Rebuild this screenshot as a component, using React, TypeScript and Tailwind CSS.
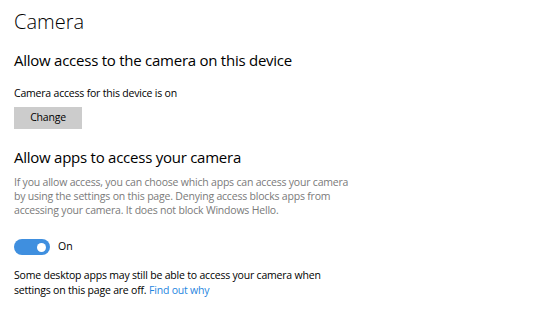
export default function App() {
  return (
    <div
      className="min-h-[336px] w-[560px] bg-white pl-[14px] text-[#000000]"
      style={{ fontFamily: '"Open Sans", "Noto Sans", sans-serif' }}
    >
      <h1 className="pt-[8px] text-[20px] font-light leading-[28px]">Camera</h1>

      <h2 className="mt-[13px] text-[15px] leading-[22px] tracking-[-0.25px]">
        Allow access to the camera on this device
      </h2>

      <p className="mt-[14px] text-[10.5px] leading-[16px] tracking-[-0.2px]">
        Camera access for this device is on
      </p>

      <button className="mt-[6px] flex h-[22px] w-[68px] items-center justify-center bg-[#cccccc] text-[10.5px] tracking-[-0.2px]">
        Change
      </button>

      <h2 className="mt-[17px] text-[15px] leading-[22px] tracking-[-0.25px]">
        Allow apps to access your camera
      </h2>

      <p className="mt-[7px] w-[345px] text-[10.5px] leading-[14px] tracking-[-0.2px] text-[#7a7a7a]">
        If you allow access, you can choose which apps can access your camera by using the
        settings on this page. Denying access blocks apps from accessing your camera. It does
        not block Windows Hello.
      </p>

      <div className="mt-[22px] flex items-center gap-[8px]">
        <div className="flex h-[16px] w-[36px] items-center justify-end rounded-full bg-[#3f8fdf] pr-[4px]">
          <div className="h-[9px] w-[9px] rounded-full bg-white" />
        </div>
        <span className="text-[10.5px]">On</span>
      </div>

      <p className="mt-[13px] w-[320px] text-[10.5px] leading-[15px] tracking-[-0.2px]">
        Some desktop apps may still be able to access your camera when settings on this page
        are off. <a className="text-[#1f86e0]">Find out why</a>
      </p>
    </div>
  );
}
